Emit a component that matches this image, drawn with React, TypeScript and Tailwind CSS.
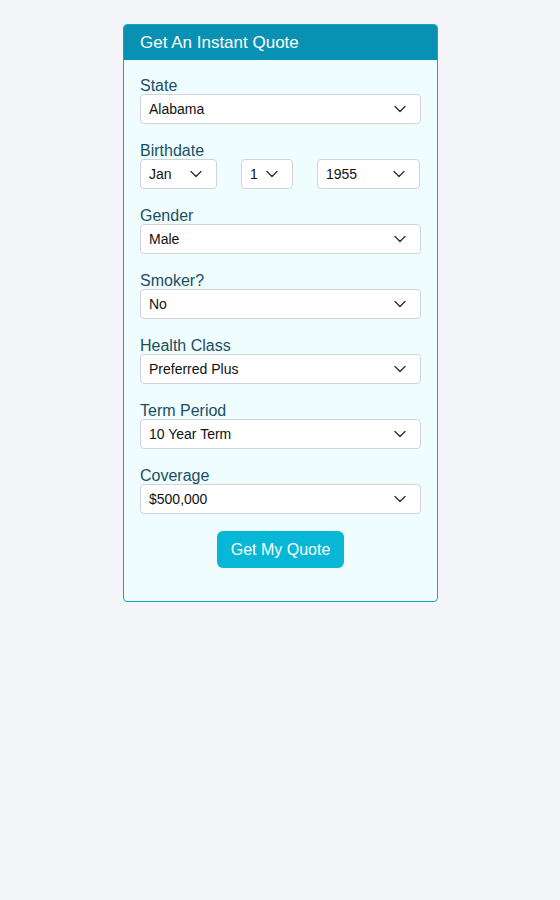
import React from "react";

function Chevron() {
  return (
    <svg width="12" height="8" viewBox="0 0 12 8" fill="none" className="pointer-events-none absolute right-[15px] top-1/2 -translate-y-1/2">
      <path d="M1 1.5 L6 6.5 L11 1.5" stroke="#333" strokeWidth="1.4" strokeLinecap="round" strokeLinejoin="round" />
    </svg>
  );
}

function Select({ value, className = "" }: { value: string; className?: string }) {
  return (
    <div className={`relative h-[30px] ${className}`}>
      <div className="flex h-full items-center rounded-[4px] border border-[#cfd4da] bg-white pl-[8px] text-[14px] text-[#111]">
        {value}
      </div>
      <Chevron />
    </div>
  );
}

function Label({ children }: { children: React.ReactNode }) {
  return <div className="h-[18px] text-[16px] leading-[20px] text-[#1b4e63]">{children}</div>;
}

function Field({ label, value }: { label: string; value: string }) {
  return (
    <div className="mb-[17px]">
      <Label>{label}</Label>
      <Select value={value} />
    </div>
  );
}

export default function App() {
  return (
    <div className="min-h-[900px] bg-[#f3f5f9] pt-[24px]" style={{ fontFamily: '"Liberation Sans", Arial, sans-serif' }}>
      <div className="ml-[123px] w-[315px] overflow-hidden rounded-[4px] border border-[#1aa3bd] bg-[#effdff]">
        <div className="flex h-[35px] items-center bg-[#0891b2] px-[16px] text-[17px] text-white">Get An Instant Quote</div>
        <div className="px-[16px] pb-[33px] pt-[16px]">
          <Field label="State" value="Alabama" />
          <div className="mb-[17px]">
            <Label>Birthdate</Label>
            <div className="flex gap-[24px]">
              <Select value="Jan" className="w-[77px]" />
              <Select value="1" className="w-[52px]" />
              <Select value="1955" className="w-[103px]" />
            </div>
          </div>
          <Field label="Gender" value="Male" />
          <Field label="Smoker?" value="No" />
          <Field label="Health Class" value="Preferred Plus" />
          <Field label="Term Period" value="10 Year Term" />
          <Field label="Coverage" value="$500,000" />
          <div className="flex justify-center">
            <button className="h-[37px] w-[127px] rounded-[6px] bg-[#07b7d5] text-[16px] text-white">Get My Quote</button>
          </div>
        </div>
      </div>
    </div>
  );
}
